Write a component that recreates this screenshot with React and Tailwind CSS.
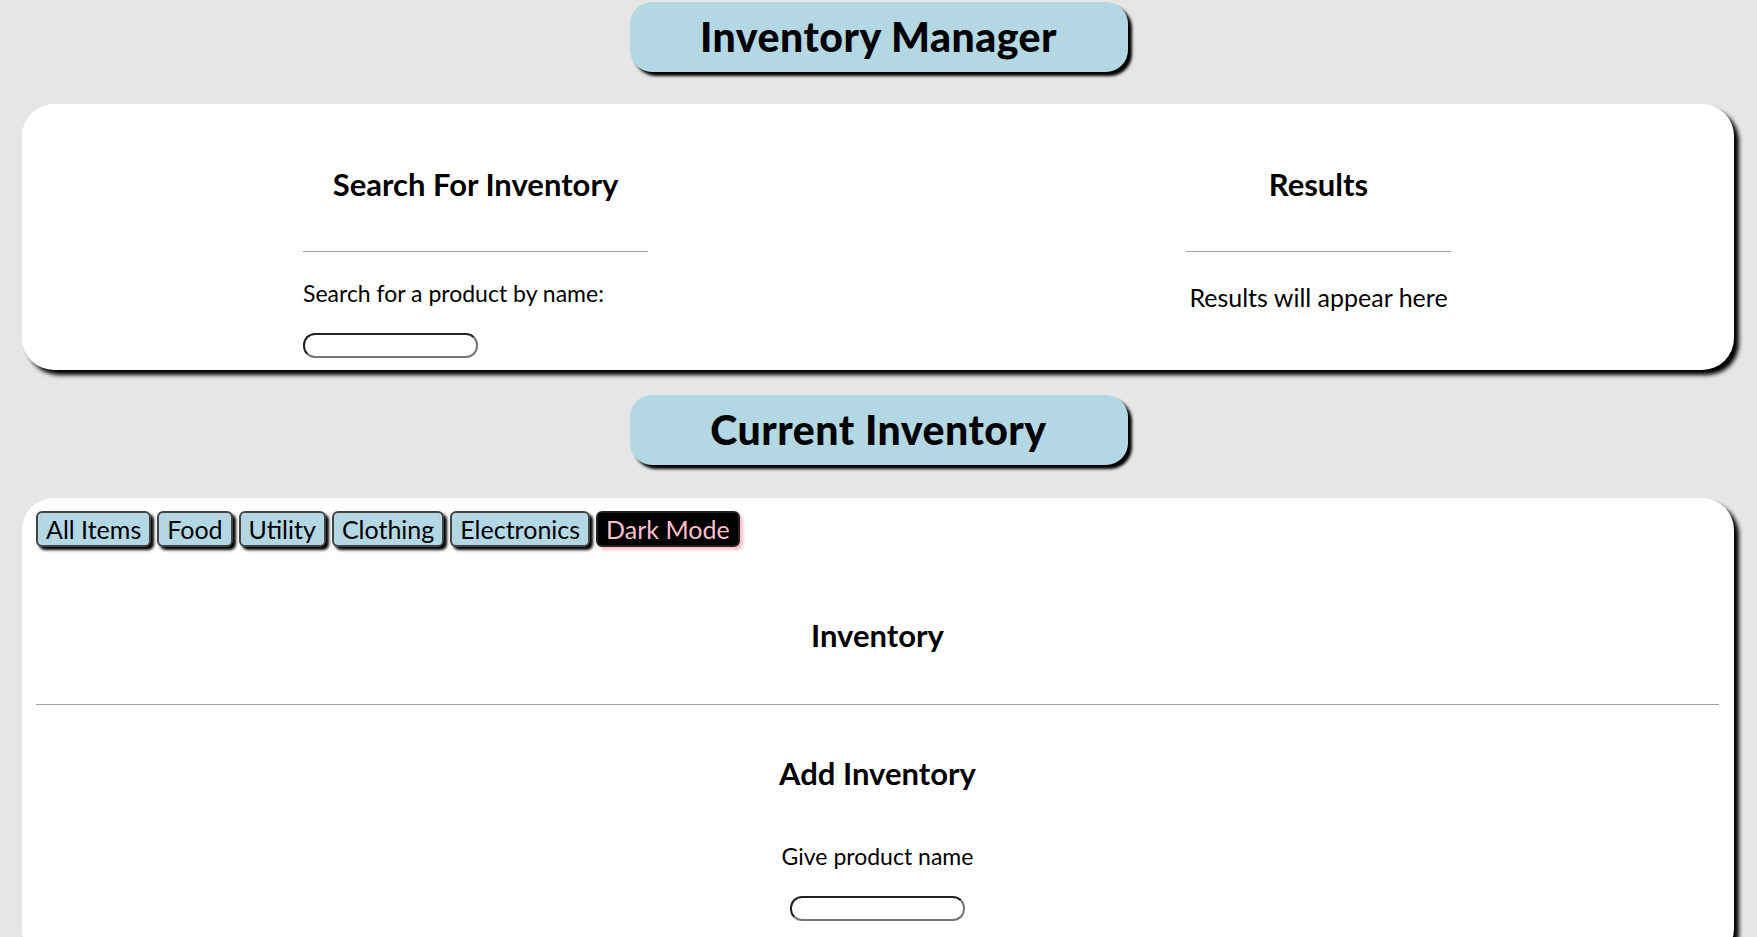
import React from "react";

const font = { fontFamily: "Lato, 'Open Sans', sans-serif" };

function Banner({ children }) {
    return (
        <div className="w-[498px] h-[70px] rounded-[22px] bg-[#b3d8e3] shadow-[4px_4px_3px_#000] flex items-center justify-center">
            <h1 className="text-[41px] font-black text-black tracking-[0.5px]">{children}</h1>
        </div>
    );
}

function TextBox() {
    return <input className="w-[175px] h-[25px] rounded-[12px] border-2 border-t-[#222] border-l-[#222] border-r-[#777] border-b-[#777] bg-white outline-none" />;
}

const tabs = ["All Items", "Food", "Utility", "Clothing", "Electronics"];

export default function App() {
    return (
        <div style={font} className="min-h-screen bg-[#e6e6e6] flex flex-col items-center pt-[2px] pb-10 text-black">
            <Banner>Inventory Manager</Banner>

            {/* search card */}
            <div className="self-stretch ml-[22px] mr-[23px] mt-[32px] bg-white rounded-[32px] shadow-[5px_5px_4px_#000] flex justify-around pl-[12px] pr-[14px] pt-[62px] pb-[12px]">
                <div className="w-[345px] flex flex-col">
                    <h2 className="text-[31px] leading-[37px] font-bold text-center">Search For Inventory</h2>
                    <div className="mt-[48px] border-t border-[#a0a0a0]" />
                    <p className="mt-[27px] text-[23px] leading-[28px]">Search for a product by name:</p>
                    <div className="mt-[26px]">
                        <TextBox />
                    </div>
                </div>
                <div className="w-[265px] flex flex-col">
                    <h2 className="text-[31px] leading-[37px] font-bold text-center">Results</h2>
                    <div className="mt-[48px] border-t border-[#a0a0a0]" />
                    <p className="mt-[30px] text-[25px] leading-[30px] text-center whitespace-nowrap">Results will appear here</p>
                </div>
            </div>

            <div className="mt-[25px]">
                <Banner>Current Inventory</Banner>
            </div>

            {/* inventory card */}
            <div className="self-stretch ml-[22px] mr-[23px] mt-[33px] bg-white rounded-[32px] shadow-[5px_5px_4px_#000] pt-[13px] pl-[14px] pr-[15px] pb-[40px]">
                <div className="flex gap-[6px]">
                    {tabs.map((t) => (
                        <button
                            key={t}
                            style={font}
                            className="h-[36px] px-[8px] rounded-[6px] border-2 border-[#444] bg-[#b3d8e3] text-[25px] leading-none shadow-[3px_3px_3px_#000]"
                        >
                            {t}
                        </button>
                    ))}
                    <button
                        style={font}
                        className="h-[36px] px-[8px] rounded-[6px] border-2 border-[#222] bg-black text-[#ffc0cb] text-[25px] leading-none shadow-[3px_3px_3px_#ffc0cb]"
                    >
                        Dark Mode
                    </button>
                </div>

                <h2 className="mt-[70px] text-[31px] leading-[37px] font-bold text-center">Inventory</h2>
                <div className="mt-[50px] border-t border-[#a0a0a0]" />

                <div className="flex flex-col items-center">
                    <h2 className="mt-[50px] text-[31px] leading-[37px] font-bold">Add Inventory</h2>
                    <p className="mt-[50px] text-[23px] leading-[28px]">Give product name</p>
                    <div className="mt-[26px]">
                        <TextBox />
                    </div>
                </div>
            </div>
        </div>
    );
}
